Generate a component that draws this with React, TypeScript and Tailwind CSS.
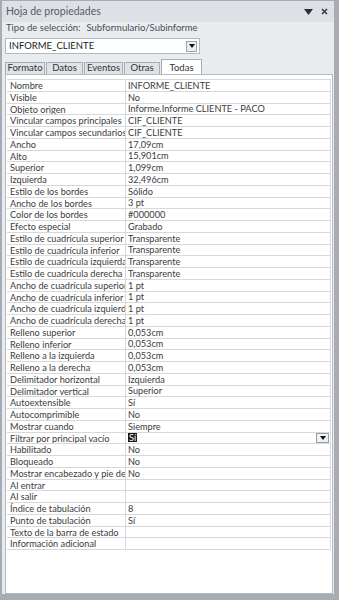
import React from 'react'

interface Property {
  label: string
  value: string
  selected?: boolean
}

const properties: Property[] = [
  { label: 'Nombre', value: 'INFORME_CLIENTE' },
  { label: 'Visible', value: 'No' },
  { label: 'Objeto origen', value: 'Informe.Informe CLIENTE - PACO' },
  { label: 'Vincular campos principales', value: 'CIF_CLIENTE' },
  { label: 'Vincular campos secundarios', value: 'CIF_CLIENTE' },
  { label: 'Ancho', value: '17,09cm' },
  { label: 'Alto', value: '15,901cm' },
  { label: 'Superior', value: '1,099cm' },
  { label: 'Izquierda', value: '32,496cm' },
  { label: 'Estilo de los bordes', value: 'Sólido' },
  { label: 'Ancho de los bordes', value: '3 pt' },
  { label: 'Color de los bordes', value: '#000000' },
  { label: 'Efecto especial', value: 'Grabado' },
  { label: 'Estilo de cuadrícula superior', value: 'Transparente' },
  { label: 'Estilo de cuadrícula inferior', value: 'Transparente' },
  { label: 'Estilo de cuadrícula izquierda', value: 'Transparente' },
  { label: 'Estilo de cuadrícula derecha', value: 'Transparente' },
  { label: 'Ancho de cuadrícula superior', value: '1 pt' },
  { label: 'Ancho de cuadrícula inferior', value: '1 pt' },
  { label: 'Ancho de cuadrícula izquierda', value: '1 pt' },
  { label: 'Ancho de cuadrícula derecha', value: '1 pt' },
  { label: 'Relleno superior', value: '0,053cm' },
  { label: 'Relleno inferior', value: '0,053cm' },
  { label: 'Relleno a la izquierda', value: '0,053cm' },
  { label: 'Relleno a la derecha', value: '0,053cm' },
  { label: 'Delimitador horizontal', value: 'Izquierda' },
  { label: 'Delimitador vertical', value: 'Superior' },
  { label: 'Autoextensible', value: 'Sí' },
  { label: 'Autocomprimible', value: 'No' },
  { label: 'Mostrar cuando', value: 'Siempre' },
  { label: 'Filtrar por principal vacío', value: 'Sí', selected: true },
  { label: 'Habilitado', value: 'No' },
  { label: 'Bloqueado', value: 'No' },
  { label: 'Mostrar encabezado y pie de página', value: 'No' },
  { label: 'Al entrar', value: '' },
  { label: 'Al salir', value: '' },
  { label: 'Índice de tabulación', value: '8' },
  { label: 'Punto de tabulación', value: 'Sí' },
  { label: 'Texto de la barra de estado', value: '' },
  { label: 'Información adicional', value: '' }
]

const DropArrow: React.FC = () => (
  <svg width="6" height="4" viewBox="0 0 6 4">
    <path d="M0 0 H6 L3 4 Z" fill="#111" />
  </svg>
)

const PropertyRow: React.FC<{ prop: Property }> = ({ prop }) => (
  <div className="flex h-[11.75px] border-b border-[#d6d8db] text-[9.2px] leading-[11px]">
    <div className="w-[119px] shrink-0 overflow-hidden whitespace-nowrap border-r border-[#d6d8db] pl-[3px] text-[#3c3c3c]">
      {prop.label}
    </div>
    <div className="flex flex-1 items-center overflow-hidden whitespace-nowrap pl-[2px] text-[#3c3c3c]">
      {prop.selected ? (
        <>
          <span className="bg-[#1a1a1a] px-[1px] leading-[9px] text-white">Sí</span>
          <span className="flex-1" />
          <span className="mr-[1px] flex h-[10px] w-[13px] items-center justify-center border border-[#9a9fa5] bg-[#eef0f2]">
            <DropArrow />
          </span>
        </>
      ) : (
        prop.value
      )}
    </div>
  </div>
)

export default function App() {
  return (
    <div
      className="flex h-[600px] w-[339px] flex-col border-b-[6px] border-l-[2px] border-r-[5px] border-t border-[#a7acb2] bg-[#e9ecef]"
      style={{ fontFamily: '"Lato", "Liberation Sans", sans-serif' }}
    >
      {/* Title bar */}
      <div className="flex h-[21px] shrink-0 items-center justify-between bg-[#dde1e6] pl-[4px] pr-[6px]">
        <span className="text-[10.5px] text-[#5a5d61]">Hoja de propiedades</span>
        <div className="flex items-center gap-[8px]">
          <svg width="9" height="6" viewBox="0 0 9 6">
            <path d="M0 0 H9 L4.5 6 Z" fill="#2b2f35" />
          </svg>
          <svg width="7" height="7" viewBox="0 0 7 7">
            <path d="M1 1 L6 6 M6 1 L1 6" stroke="#3b3f45" strokeWidth="1.6" />
          </svg>
        </div>
      </div>

      {/* Selection type */}
      <div className="flex h-[13px] shrink-0 items-center gap-[6px] pl-[4px] text-[9.5px] text-[#4a4d52]">
        <span>Tipo de selección:</span>
        <span>Subformulario/Subinforme</span>
      </div>

      {/* Object dropdown */}
      <div className="ml-[3px] mt-[3px] flex h-[16px] w-[195px] shrink-0 items-center justify-between border border-[#b3b8be] bg-white pl-[3px] pr-[2px]">
        <span className="text-[9.5px] text-[#1a1a1a]">INFORME_CLIENTE</span>
        <span className="flex h-[11px] w-[11px] items-center justify-center border border-[#9ea3a9] bg-[#eceef0]">
          <DropArrow />
        </span>
      </div>

      {/* Tabs */}
      <div className="ml-[3px] mt-[4px] flex h-[16px] shrink-0 items-end gap-[1px] text-[9.5px] text-[#333]">
        <div className="flex h-[12px] w-[40px] items-center justify-center border border-b-0 border-[#a9aeb4] bg-[#dfe3e7]">
          Formato
        </div>
        <div className="flex h-[12px] w-[37px] items-center justify-center border border-b-0 border-[#a9aeb4] bg-[#dfe3e7]">
          Datos
        </div>
        <div className="flex h-[12px] w-[39px] items-center justify-center border border-b-0 border-[#a9aeb4] bg-[#dfe3e7]">
          Eventos
        </div>
        <div className="flex h-[12px] w-[36px] items-center justify-center border border-b-0 border-[#a9aeb4] bg-[#dfe3e7]">
          Otras
        </div>
        <div className="-mb-[1px] flex h-[16px] w-[41px] items-start justify-center border border-b-0 border-[#a9aeb4] bg-white pt-[1px]">
          Todas
        </div>
      </div>

      {/* Property grid */}
      <div className="ml-[3px] mr-[1px] flex-1 border border-[#b6bbc1] bg-white pl-[1px] pr-[1px] pt-[4px]">
        <div className="border-r border-t border-[#d6d8db]">
          {properties.map((prop) => (
            <PropertyRow key={prop.label} prop={prop} />
          ))}
        </div>
      </div>
    </div>
  )
}
